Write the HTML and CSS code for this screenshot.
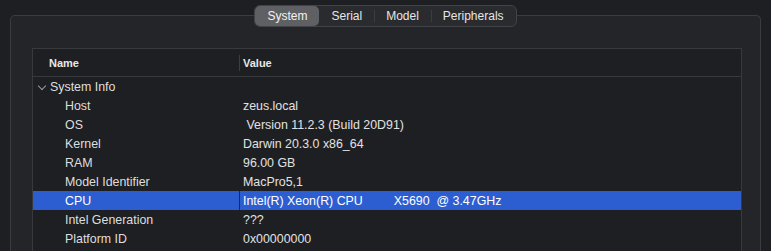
FILE: index.html
```
<!DOCTYPE html>
<html lang="en">
<head>
    <meta charset="UTF-8">
    <title>System Info</title>
    <link rel="stylesheet" href="styles.css">
</head>
<body>
    <div class="tabs">
        <div class="tab selected">System</div>
        <div class="tab">Serial</div>
        <div class="tab sep">Model</div>
        <div class="tab sep">Peripherals</div>
    </div>
    <div class="group">
        <div class="outline">
            <div class="head">
                <div class="col-name">Name</div>
                <div class="col-value">Value</div>
            </div>
            <div class="row parent">
                <div class="col-name"><span class="chevron"></span>System Info</div>
                <div class="col-value"></div>
            </div>
            <div class="row">
                <div class="col-name">Host</div>
                <div class="col-value">zeus.local</div>
            </div>
            <div class="row">
                <div class="col-name">OS</div>
                <div class="col-value"> Version 11.2.3 (Build 20D91)</div>
            </div>
            <div class="row">
                <div class="col-name">Kernel</div>
                <div class="col-value">Darwin 20.3.0 x86_64</div>
            </div>
            <div class="row">
                <div class="col-name">RAM</div>
                <div class="col-value">96.00 GB</div>
            </div>
            <div class="row">
                <div class="col-name">Model Identifier</div>
                <div class="col-value">MacPro5,1</div>
            </div>
            <div class="row active">
                <div class="col-name">CPU</div>
                <div class="col-value">Intel(R) Xeon(R) CPU         X5690  @ 3.47GHz</div>
            </div>
            <div class="row">
                <div class="col-name">Intel Generation</div>
                <div class="col-value">???</div>
            </div>
            <div class="row">
                <div class="col-name">Platform ID</div>
                <div class="col-value">0x00000000</div>
            </div>
        </div>
    </div>
</body>
</html>
```

FILE: styles.css
```
*{
    box-sizing: border-box;
}
html, body{
    margin: 0;
    height: 100%;
    overflow: hidden;
}
body{
    background-color: #1e1f22;
    font-family: "Liberation Sans", Arial, sans-serif;
    color: #dedede;
    padding-top: 5px;
}

.tabs{
    position: relative;
    z-index: 1;
    display: flex;
    width: max-content;
    height: 22px;
    margin: 0 auto;
    background-color: #2a2b2e;
    border: 1px solid #424346;
    border-radius: 6px;
    font-size: 12px;
    color: #e6e6e6;
}
.tab{
    position: relative;
    padding: 0 12px;
    line-height: 20px;
}
.tab.sep::before{
    content: "";
    position: absolute;
    left: 0;
    top: 4px;
    height: 12px;
    border-left: 1px solid #3c3d40;
}
.tab.selected{
    background-color: #5f6064;
    border-radius: 5px;
    color: #f2f2f2;
}

.group{
    margin: -12px 10px 0 10px;
    height: 236px;
    border-bottom: none !important;
    background-color: #242529;
    border: 1px solid #3b3c40;
    border-radius: 5px 5px 0 0;
    padding: 32px 18px 0 21px;
}

.outline{
    background-color: #1e1f22;
    border: 1px solid #38393c;
    border-bottom: none;
    height: 203px;
    font-size: 12.4px;
}

.head{
    display: flex;
    height: 28px;
    border-bottom: 1px solid #38393c;
    font-size: 11px;
    font-weight: bold;
    color: #e8e8e8;
}
.head .col-name{
    padding-left: 16px;
    border-right: 1px solid #3d3e41;
    height: 16px;
    margin-top: 6px;
    line-height: 17px;
}
.head .col-value{
    padding-left: 3px;
    margin-top: 6px;
    line-height: 17px;
}

.col-name{
    width: 207px;
    flex: none;
}
.col-value{
    flex: 1;
    white-space: pre;
}

.row{
    display: flex;
    height: 19px;
    line-height: 21px;
}
.row .col-name{
    padding-left: 32px;
    border-right: 1px solid transparent;
}
.row .col-value{
    padding-left: 3px;
    color: #e2e2e2;
}
.row.parent .col-name{
    padding-left: 3px;
}
.chevron{
    display: inline-block;
    width: 6px;
    height: 6px;
    border-right: 1px solid #9a9a9c;
    border-bottom: 1px solid #9a9a9c;
    transform: rotate(45deg);
    margin: 0 5px 4px 3px;
    vertical-align: middle;
}

.row.active{
    background-color: #2d5ed1;
    color: #ffffff;
}
.row.active .col-name{
    border-right-color: #1e2a45;
}
.row.active .col-value{
    color: #ffffff;
}
```
